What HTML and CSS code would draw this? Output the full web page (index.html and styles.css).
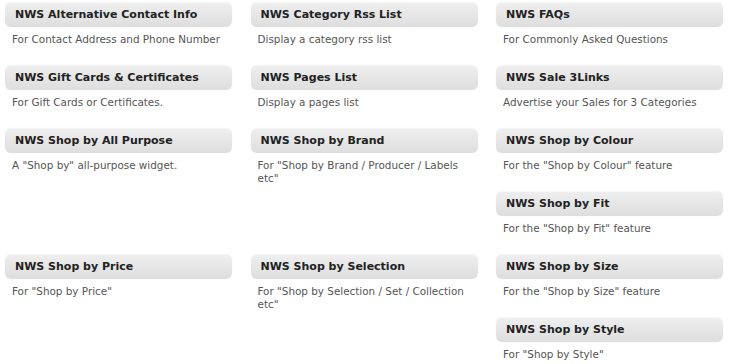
FILE: index.html
```html
<!DOCTYPE html>
<html lang="en">
<head>
    <meta charset="UTF-8">
    <title>Available Widgets</title>
    <link rel="stylesheet" href="styles.css">
</head>
<body>
    <div class="widget-list">
        <div class="widget">
            <div class="widget-title">NWS Alternative Contact Info</div>
            <div class="widget-desc">For Contact Address and Phone Number</div>
        </div>
        <div class="widget">
            <div class="widget-title">NWS Category Rss List</div>
            <div class="widget-desc">Display a category rss list</div>
        </div>
        <div class="widget">
            <div class="widget-title">NWS FAQs</div>
            <div class="widget-desc">For Commonly Asked Questions</div>
        </div>
        <div class="widget">
            <div class="widget-title">NWS Gift Cards &amp; Certificates</div>
            <div class="widget-desc">For Gift Cards or Certificates.</div>
        </div>
        <div class="widget">
            <div class="widget-title">NWS Pages List</div>
            <div class="widget-desc">Display a pages list</div>
        </div>
        <div class="widget">
            <div class="widget-title">NWS Sale 3Links</div>
            <div class="widget-desc">Advertise your Sales for 3 Categories</div>
        </div>
        <div class="widget">
            <div class="widget-title">NWS Shop by All Purpose</div>
            <div class="widget-desc">A "Shop by" all-purpose widget.</div>
        </div>
        <div class="widget">
            <div class="widget-title">NWS Shop by Brand</div>
            <div class="widget-desc">For "Shop by Brand / Producer / Labels etc"</div>
        </div>
        <div class="widget">
            <div class="widget-title">NWS Shop by Colour</div>
            <div class="widget-desc">For the "Shop by Colour" feature</div>
        </div>
        <div class="widget">
            <div class="widget-title">NWS Shop by Fit</div>
            <div class="widget-desc">For the "Shop by Fit" feature</div>
        </div>
        <div class="widget">
            <div class="widget-title">NWS Shop by Price</div>
            <div class="widget-desc">For "Shop by Price"</div>
        </div>
        <div class="widget">
            <div class="widget-title">NWS Shop by Selection</div>
            <div class="widget-desc">For "Shop by Selection / Set / Collection etc"</div>
        </div>
        <div class="widget">
            <div class="widget-title">NWS Shop by Size</div>
            <div class="widget-desc">For the "Shop by Size" feature</div>
        </div>
        <div class="widget">
            <div class="widget-title">NWS Shop by Style</div>
            <div class="widget-desc">For "Shop by Style"</div>
        </div>
    </div>
</body>
</html>
```

FILE: styles.css
```css
body {
    margin: 0;
    background: #fff;
    font-family: "DejaVu Sans", Verdana, sans-serif;
    overflow-x: hidden;
}
.widget-list {
    padding: 2px 0 0 5px;
    margin-right: -19px;
    overflow: hidden;
}
.widget {
    float: left;
    width: 227px;
    margin: 0 18.5px 19px 0;
}
.widget-title {
    height: 25px;
    line-height: 26px;
    padding: 0 10px;
    font-size: 11px;
    font-weight: bold;
    color: #222;
    background: linear-gradient(to bottom, #efefef, #dedede);
    border-radius: 6px;
    box-shadow: inset 0 1px 0 #f7f7f7, 0 0 1px rgba(0, 0, 0, 0.12);
}
.widget-desc {
    padding: 6px 7px 0;
    font-size: 10.4px;
    line-height: 13px;
    color: #555;
}
```
